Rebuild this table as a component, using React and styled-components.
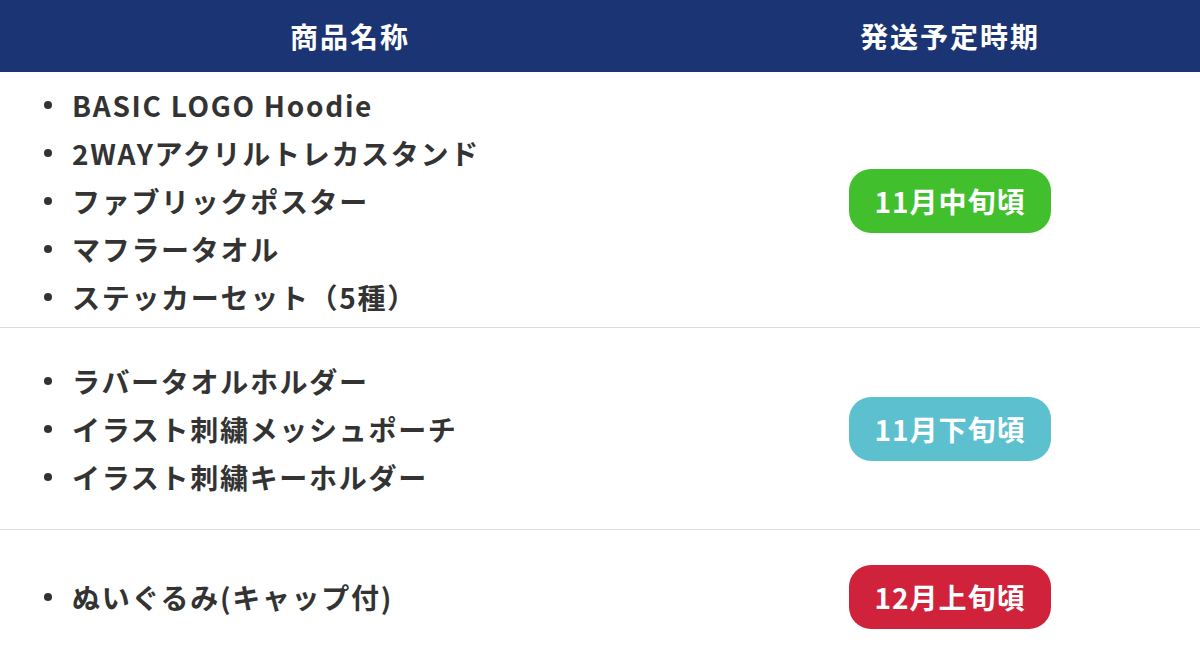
import React from 'react';
import styled, { createGlobalStyle } from 'styled-components';

const GlobalStyle = createGlobalStyle`
  html, body {
    margin: 0;
    padding: 0;
    background: #fff;
  }
  body {
    font-family: "Noto Sans CJK JP", "Noto Sans", sans-serif;
    color: #333;
  }
`;

const Table = styled.div`
  width: 1200px;
`;

const HeaderRow = styled.div`
  display: grid;
  grid-template-columns: 700px 1fr;
  height: 72px;
  align-items: center;
  background-color: #1b3474;
`;

const HeaderCell = styled.div`
  text-align: center;
  color: #fff;
  font-size: 28px;
  font-weight: 700;
  letter-spacing: 2px;
`;

const Row = styled.div`
  display: grid;
  grid-template-columns: 700px 1fr;
  align-items: center;
  padding: ${(p) => p.$pad};
  border-bottom: ${(p) => (p.$last ? 'none' : '1px solid #dcdcdc')};
`;

const ItemList = styled.ul`
  list-style: none;
  margin: 0;
  padding: 0 0 0 44px;
`;

const Item = styled.li`
  display: flex;
  align-items: center;
  font-size: 28px;
  font-weight: 700;
  line-height: 48px;
  letter-spacing: 1.7px;
  color: #333;

  &::before {
    content: '';
    flex: none;
    width: 8px;
    height: 8px;
    border-radius: 50%;
    background: #333;
    margin-right: 20px;
  }
`;

const BadgeCell = styled.div`
  display: flex;
  justify-content: center;
`;

const Badge = styled.span`
  display: inline-flex;
  align-items: center;
  justify-content: center;
  width: 202px;
  height: 64px;
  border-radius: 22px;
  background-color: ${(p) => p.$color};
  color: #fff;
  font-size: 28px;
  font-weight: 700;
  letter-spacing: 1px;
`;

const groups = [
  {
    items: [
      'BASIC LOGO Hoodie',
      '2WAYアクリルトレカスタンド',
      'ファブリックポスター',
      'マフラータオル',
      'ステッカーセット（5種）',
    ],
    label: '11月中旬頃',
    color: '#42bf2d',
    pad: '9px 0 6px',
  },
  {
    items: ['ラバータオルホルダー', 'イラスト刺繍メッシュポーチ', 'イラスト刺繍キーホルダー'],
    label: '11月下旬頃',
    color: '#5cc0cf',
    pad: '29px 0 28px',
  },
  {
    items: ['ぬいぐるみ(キャップ付)'],
    label: '12月上旬頃',
    color: '#d0223a',
    pad: '35px 0 44px',
  },
];

const App = () => {
  return (
    <Table>
      <GlobalStyle />
      <HeaderRow>
        <HeaderCell>商品名称</HeaderCell>
        <HeaderCell>発送予定時期</HeaderCell>
      </HeaderRow>
      {groups.map((g, i) => (
        <Row key={g.label} $pad={g.pad} $last={i === groups.length - 1}>
          <ItemList>
            {g.items.map((it) => (
              <Item key={it}>{it}</Item>
            ))}
          </ItemList>
          <BadgeCell>
            <Badge $color={g.color}>{g.label}</Badge>
          </BadgeCell>
        </Row>
      ))}
    </Table>
  );
};

export default App;
